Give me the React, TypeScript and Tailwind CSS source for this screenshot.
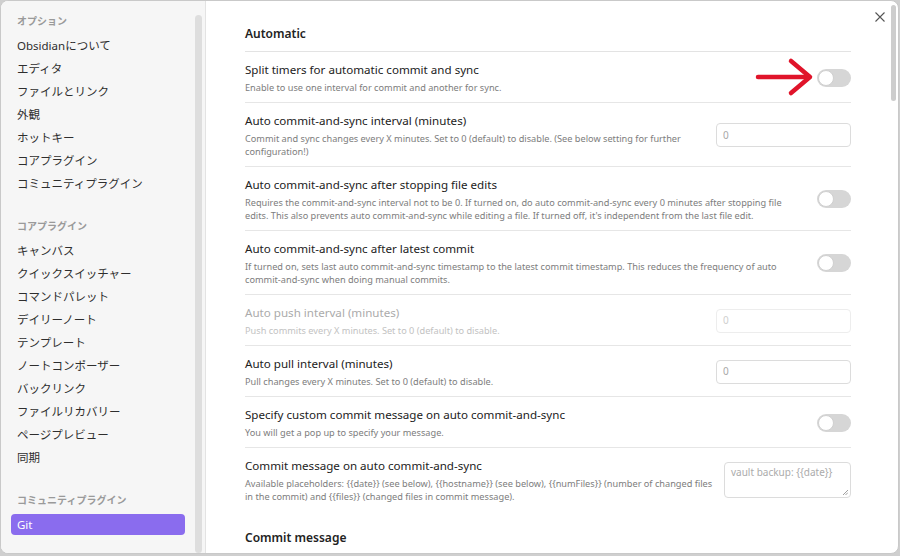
import type { ReactNode } from 'react'

const font = { fontFamily: '"Noto Sans", "Noto Sans CJK JP", sans-serif' }

const optionItems = ['Obsidianについて', 'エディタ', 'ファイルとリンク', '外観', 'ホットキー', 'コアプラグイン', 'コミュニティプラグイン']
const coreItems = ['キャンバス', 'クイックスイッチャー', 'コマンドパレット', 'デイリーノート', 'テンプレート', 'ノートコンポーザー', 'バックリンク', 'ファイルリカバリー', 'ページプレビュー', '同期']

function NavHeader({ children }: { children: ReactNode }) {
  return <div className="px-4 text-[10px] font-semibold leading-[16px] text-[#9a9a9a]">{children}</div>
}

function NavItem({ label, active }: { label: string; active?: boolean }) {
  return (
    <div
      className={
        active
          ? 'mx-[10px] rounded-[4px] bg-[#8a6cee] px-[6px] text-[11.5px] leading-[21px] text-white'
          : 'px-4 text-[11.5px] leading-[23px] text-[#2e2e2e]'
      }
    >
      {label}
    </div>
  )
}

function Toggle() {
  return (
    <div className="flex h-[18px] w-[34px] items-center rounded-full bg-[#d6d6d6] p-[1px]">
      <div className="h-[16px] w-[16px] rounded-full border border-[#d0d0d0] bg-white" />
    </div>
  )
}

function NumberInput({ disabled }: { disabled?: boolean }) {
  return (
    <div
      className={
        'flex h-[24px] w-[135px] items-center rounded-[4px] border bg-white px-[6px] text-[10px] ' +
        (disabled ? 'border-[#ededed] text-[#cfcfcf]' : 'border-[#dcdcdc] text-[#a8a8a8]')
      }
    >
      0
    </div>
  )
}

type RowProps = {
  title: string
  desc: ReactNode
  control: ReactNode
  disabled?: boolean
  last?: boolean
}

function SettingRow({ title, desc, control, disabled, last }: RowProps) {
  return (
    <div className={'flex items-center gap-4 pb-[8px] pt-[9px] ' + (last ? '' : 'border-b border-[#e6e6e6]')}>
      <div className="min-w-0 flex-1">
        <div className={'whitespace-nowrap text-[11.6px] leading-[18px] ' + (disabled ? 'text-[#ababab]' : 'text-[#222]')}>
          {title}
        </div>
        <div
          className={
            'mt-[2px] whitespace-nowrap text-[9.2px] leading-[13px] ' + (disabled ? 'text-[#c2c2c2]' : 'text-[#7d7d7d]')
          }
        >
          {desc}
        </div>
      </div>
      <div className="shrink-0">{control}</div>
    </div>
  )
}

export default function App() {
  return (
    <div className="h-[556px] w-[900px] overflow-hidden bg-[#cfcfcf]" style={font}>
      <div className="relative flex h-[554px] w-[899px] overflow-hidden rounded-[8px] border border-[#c9c9c9] bg-white">
        <aside className="flex w-[204px] shrink-0 bg-[#f6f6f6]">
          <div className="flex-1 pt-[12px]">
            <NavHeader>オプション</NavHeader>
            <div className="mt-[5px]">
              {optionItems.map((i) => (
                <NavItem key={i} label={i} />
              ))}
            </div>
            <div className="mt-[23px]">
              <NavHeader>コアプラグイン</NavHeader>
            </div>
            <div className="mt-[5px]">
              {coreItems.map((i) => (
                <NavItem key={i} label={i} />
              ))}
            </div>
            <div className="mt-[23px]">
              <NavHeader>コミュニティプラグイン</NavHeader>
            </div>
            <div className="mt-[6px]">
              <NavItem label="Git" active />
            </div>
          </div>
          <div className="mr-[3px] mt-[14px] w-[7px] rounded-full bg-[#dedede]" />
        </aside>

        <main className="flex min-w-0 flex-1 border-l border-[#e3e3e3]">
          <div className="min-w-0 flex-1 pl-[39px] pr-[40px] pt-[24px]">
            <div className="border-b border-[#e3e3e3] pb-[8px] text-[12px] font-semibold leading-[18px] text-[#222]">
              Automatic
            </div>
            <SettingRow
              title="Split timers for automatic commit and sync"
              desc="Enable to use one interval for commit and another for sync."
              control={<Toggle />}
            />
            <SettingRow
              title="Auto commit-and-sync interval (minutes)"
              desc={
                <>
                  Commit and sync changes every X minutes. Set to 0 (default) to disable. (See below setting for further
                  <br />
                  configuration!)
                </>
              }
              control={<NumberInput />}
            />
            <SettingRow
              title="Auto commit-and-sync after stopping file edits"
              desc={
                <>
                  Requires the commit-and-sync interval not to be 0. If turned on, do auto commit-and-sync every 0 minutes after stopping file
                  <br />
                  edits. This also prevents auto commit-and-sync while editing a file. If turned off, it's independent from the last file edit.
                </>
              }
              control={<Toggle />}
            />
            <SettingRow
              title="Auto commit-and-sync after latest commit"
              desc={
                <>
                  If turned on, sets last auto commit-and-sync timestamp to the latest commit timestamp. This reduces the frequency of auto
                  <br />
                  commit-and-sync when doing manual commits.
                </>
              }
              control={<Toggle />}
            />
            <SettingRow
              title="Auto push interval (minutes)"
              desc="Push commits every X minutes. Set to 0 (default) to disable."
              control={<NumberInput disabled />}
              disabled
            />
            <SettingRow
              title="Auto pull interval (minutes)"
              desc="Pull changes every X minutes. Set to 0 (default) to disable."
              control={<NumberInput />}
            />
            <SettingRow
              title="Specify custom commit message on auto commit-and-sync"
              desc="You will get a pop up to specify your message."
              control={<Toggle />}
            />
            <SettingRow
              title="Commit message on auto commit-and-sync"
              desc={
                <>
                  Available placeholders: {'{{date}}'} (see below), {'{{hostname}}'} (see below), {'{{numFiles}}'} (number of changed files
                  <br />
                  in the commit) and {'{{files}}'} (changed files in commit message).
                </>
              }
              control={
                <div className="relative h-[36px] w-[127px] rounded-[4px] border border-[#dcdcdc] bg-white px-[6px] pt-[2px] text-[10px] text-[#ababab]">
                  vault backup: {'{{date}}'}
                  <svg className="absolute bottom-[2px] right-[2px]" width="6" height="6" viewBox="0 0 6 6">
                    <path d="M1 6 L6 1 M3.5 6 L6 3.5" stroke="#888" strokeWidth="0.8" />
                  </svg>
                </div>
              }
              last
            />
            <div className="mt-[18px] text-[12px] font-semibold leading-[18px] text-[#222]">Commit message</div>
          </div>
          <div className="mr-[2px] mt-[4px] h-[96px] w-[5px] rounded-full bg-[#cdcdcd]" />
        </main>

        <svg className="absolute left-[873px] top-[10px]" width="12" height="12" viewBox="0 0 12 12">
          <path d="M1.5 1.5 L10.5 10.5 M10.5 1.5 L1.5 10.5" stroke="#555" strokeWidth="1.1" />
        </svg>

        <svg className="absolute left-[754px] top-[56px]" width="60" height="40" viewBox="0 0 60 40">
          <path d="M3 20 L54 20" stroke="#e0142a" strokeWidth="4.5" strokeLinecap="round" />
          <path d="M36 4 L55 20 L36 36" fill="none" stroke="#e0142a" strokeWidth="4.5" strokeLinecap="round" strokeLinejoin="round" />
        </svg>
      </div>
    </div>
  )
}
